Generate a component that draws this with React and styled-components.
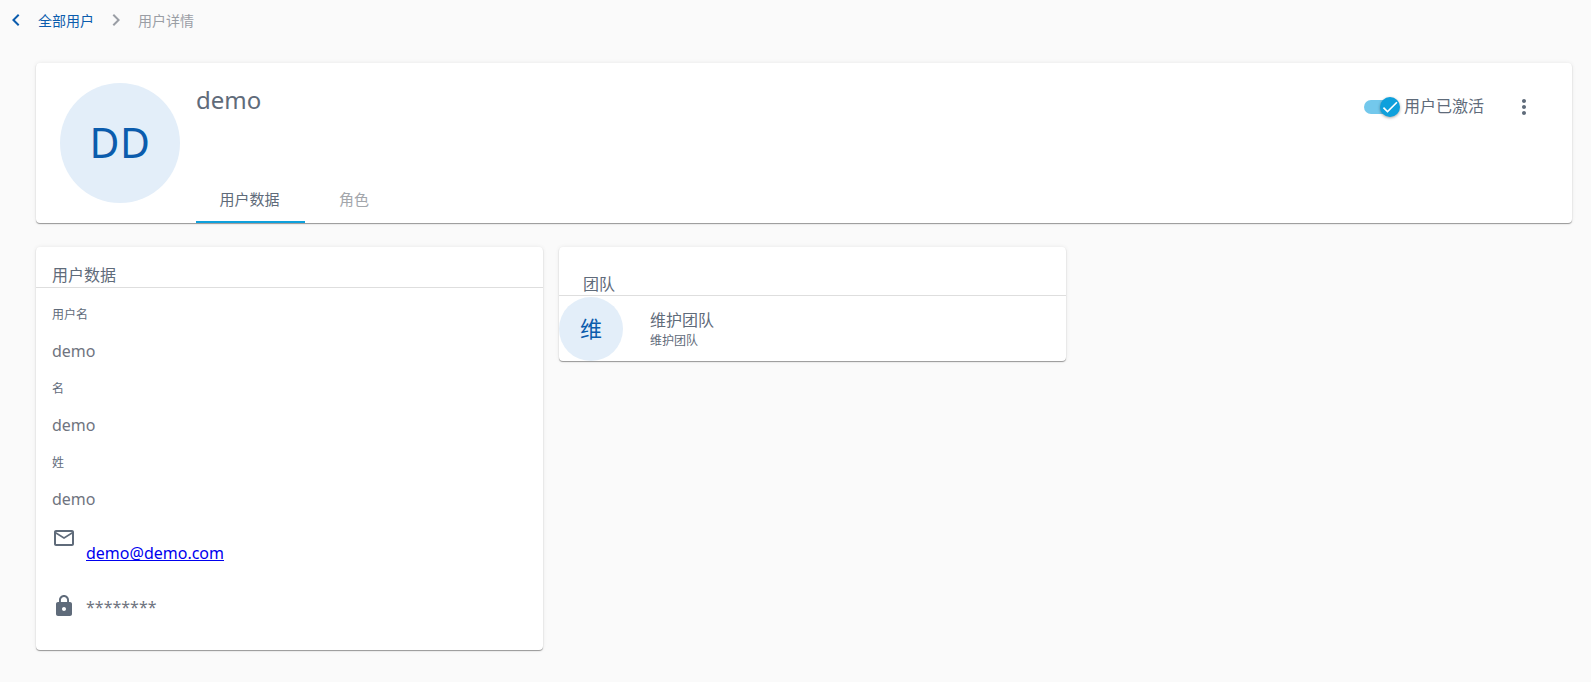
import React from "react";
import styled, { createGlobalStyle } from "styled-components";

const Global = createGlobalStyle`
  html, body { margin: 0; padding: 0; background: #fafafa; }
  body { font-family: "Noto Sans", "Noto Sans CJK SC", sans-serif; color: #5f6b7a; }
`;
const Page = styled.div`width: 1591px; height: 682px; overflow: hidden; background: #fafafa;`;
const Breadcrumb = styled.nav`
  height: 40px; display: flex; align-items: center; padding-left: 4px; font-size: 14px; box-sizing: border-box;
`;
const Crumb = styled.span`
  color: ${p => p.$active ? "#0b5cad" : "#9a9ea5"};
  margin-left: ${p => p.$ml}px;
`;
const Ico = styled.svg`
  display: block; flex: none; width: ${p => p.$s || 24}px; height: ${p => p.$s || 24}px; fill: currentColor;
`;
const Chevron = styled.span`
  display: flex; color: ${p => p.$c}; margin-left: ${p => p.$ml || 0}px;
`;
const Content = styled.main`padding: 23px 19px 0 36px;`;
const Card = styled.section`
  background: #fff; border-radius: 4px; box-sizing: border-box;
  box-shadow: 0 1px 1px 0 rgba(0,0,0,.38), 0 0 4px rgba(0,0,0,.08);
`;
const HeaderCard = styled(Card)`
  height: 160px; display: flex; padding-left: 24px; position: relative;
`;
const Avatar = styled.div`
  flex: none; width: ${p => p.$s}px; height: ${p => p.$s}px; border-radius: 50%;
  background: #e3eef9; color: #0b5cad; font-size: ${p => p.$f}px; box-sizing: border-box;
  display: flex; align-items: center; justify-content: center;
`;
const HeaderAvatar = styled(Avatar)`margin-top: 20px; padding-bottom: 2px; letter-spacing: 0.5px;`;
const TeamAvatar = styled(Avatar)`padding-bottom: 4px;`;
const HeaderMain = styled.div`
  margin-left: 16px; flex: 1; display: flex; flex-direction: column; justify-content: space-between;
`;
const Name = styled.h1`
  margin: 0; padding-top: 19px; font-size: 24px; font-weight: 400; line-height: 36px; color: #5f6b7a;
`;
const Tabs = styled.div`display: flex;`;
const Tab = styled.div`
  width: ${p => p.$w}px; height: 48px; box-sizing: border-box; display: flex; align-items: center; justify-content: center;
  padding-right: 2px; font-size: 15px; color: ${p => p.$on ? "#5f6b7a" : "#a3a6ab"};
  border-bottom: 2px solid ${p => p.$on ? "#0ea0dc" : "transparent"};
`;
const Actions = styled.div`
  position: absolute; top: 32px; right: 36px; display: flex; align-items: center;
`;
const Switch = styled.div`
  position: relative; width: 36px; height: 24px; display: flex; align-items: center;
`;
const Track = styled.div`width: 34px; height: 14px; border-radius: 7px; background: #73c8ec;`;
const Thumb = styled.div`
  position: absolute; right: 0; top: 2px; width: 20px; height: 20px; border-radius: 50%;
  background: #0ea0dc; color: #fff; display: flex; align-items: center; justify-content: center;
  box-shadow: 0 1px 3px rgba(0,0,0,.35);
`;
const SwitchLabel = styled.span`font-size: 16px; line-height: 22px; margin-left: 4px; padding-bottom: 2px; color: #5f6b7a;`;
const More = styled.span`display: flex; margin-left: 28px; color: #5f6b7a;`;
const Columns = styled.div`display: flex; align-items: flex-start; gap: 16px; margin-top: 24px;`;
const UserCard = styled(Card)`width: 507px; height: 403px;`;
const TeamCard = styled(Card)`width: 507px; height: 114px;`;
const SectionTitle = styled.h2`
  margin: 0; font-size: 16px; font-weight: 400; line-height: 24px; color: #5f6b7a;
  padding: ${p => p.$top}px 0 0 ${p => p.$left}px; height: ${p => p.$h}px; box-sizing: border-box;
  border-bottom: 1px solid #dedede;
`;
const Fields = styled.div`padding: 16px 16px 0;`;
const Label = styled.div`font-size: 12px; line-height: 20px; padding-top: 1px; color: #5f6b7a;`;
const Value = styled.div`font-size: 16px; line-height: 24px; color: #6f7480; margin: 14px 0 15px;`;
const Row = styled.div`display: flex; margin-top: ${p => p.$mt}px; align-items: ${p => p.$al};`;
const IconCell = styled.span`
  display: flex; width: 24px; color: #5f6b7a; margin-right: 10px;
`;
const Mail = styled.a`
  font-size: 16px; line-height: 24px; color: #0000ee; text-decoration: underline; margin-top: 15px;
`;
const Stars = styled.span`font-size: 16px; line-height: 24px; color: #6f7480; padding-top: 2px;`;
const TeamRow = styled.div`display: flex; align-items: center; margin-top: 1px;`;
const TeamText = styled.div`margin-left: 27px;`;
const TeamName = styled.div`font-size: 16px; line-height: 24px; color: #5f6b7a;`;
const TeamSub = styled.div`font-size: 12px; line-height: 18px; color: #5f6b7a;`;

export default function App() {
  return (
    <Page>
      <Global />
      <Breadcrumb>
        <Chevron $c="#0b5cad"><Ico viewBox="0 0 24 24"><path d="M15.41 7.41 14 6l-6 6 6 6 1.41-1.41L10.83 12z" /></Ico></Chevron>
        <Crumb $active $ml={10}>全部用户</Crumb>
        <Chevron $c="#9a9ea5" $ml={10}><Ico viewBox="0 0 24 24"><path d="M10 6 8.59 7.41 13.17 12l-4.58 4.59L10 18l6-6z" /></Ico></Chevron>
        <Crumb $ml={10}>用户详情</Crumb>
      </Breadcrumb>
      <Content>
        <HeaderCard>
          <HeaderAvatar $s={120} $f={41}>DD</HeaderAvatar>
          <HeaderMain>
            <Name>demo</Name>
            <Tabs>
              <Tab $w={109} $on>用户数据</Tab>
              <Tab $w={100}>角色</Tab>
            </Tabs>
          </HeaderMain>
          <Actions>
            <Switch>
              <Track />
              <Thumb><Ico viewBox="0 0 24 24" $s="20"><path d="M9 16.17 4.83 12l-1.42 1.41L9 19 21 7l-1.41-1.41z" /></Ico></Thumb>
            </Switch>
            <SwitchLabel>用户已激活</SwitchLabel>
            <More><Ico viewBox="0 0 24 24"><path d="M12 8c1.1 0 2-.9 2-2s-.9-2-2-2-2 .9-2 2 .9 2 2 2zm0 2c-1.1 0-2 .9-2 2s.9 2 2 2 2-.9 2-2-.9-2-2-2zm0 6c-1.1 0-2 .9-2 2s.9 2 2 2 2-.9 2-2-.9-2-2-2z" /></Ico></More>
          </Actions>
        </HeaderCard>
        <Columns>
          <UserCard>
            <SectionTitle $top={16} $left={16} $h={41}>用户数据</SectionTitle>
            <Fields>
              <Label>用户名</Label>
              <Value>demo</Value>
              <Label>名</Label>
              <Value>demo</Value>
              <Label>姓</Label>
              <Value>demo</Value>
              <Row $mt={0} $al="flex-start">
                <IconCell><Ico viewBox="0 0 24 24"><path d="M22 6c0-1.1-.9-2-2-2H4c-1.1 0-2 .9-2 2v12c0 1.1.9 2 2 2h16c1.1 0 2-.9 2-2V6zm-2 0-8 5-8-5h16zm0 12H4V8l8 5 8-5v10z" /></Ico></IconCell>
                <Mail href="#">demo@demo.com</Mail>
              </Row>
              <Row $mt={28} $al="center">
                <IconCell><Ico viewBox="0 0 24 24"><path d="M18 8h-1V6c0-2.76-2.24-5-5-5S7 3.24 7 6v2H6c-1.1 0-2 .9-2 2v10c0 1.1.9 2 2 2h12c1.1 0 2-.9 2-2V10c0-1.1-.9-2-2-2zm-6 9c-1.1 0-2-.9-2-2s.9-2 2-2 2 .9 2 2-.9 2-2 2zm3.1-9H8.9V6c0-1.71 1.39-3.1 3.1-3.1 1.71 0 3.1 1.39 3.1 3.1v2z" /></Ico></IconCell>
                <Stars>********</Stars>
              </Row>
            </Fields>
          </UserCard>
          <TeamCard>
            <SectionTitle $top={25} $left={24} $h={49}>团队</SectionTitle>
            <TeamRow>
              <TeamAvatar $s={64} $f={22}>维</TeamAvatar>
              <TeamText>
                <TeamName>维护团队</TeamName>
                <TeamSub>维护团队</TeamSub>
              </TeamText>
            </TeamRow>
          </TeamCard>
        </Columns>
      </Content>
    </Page>
  );
}
